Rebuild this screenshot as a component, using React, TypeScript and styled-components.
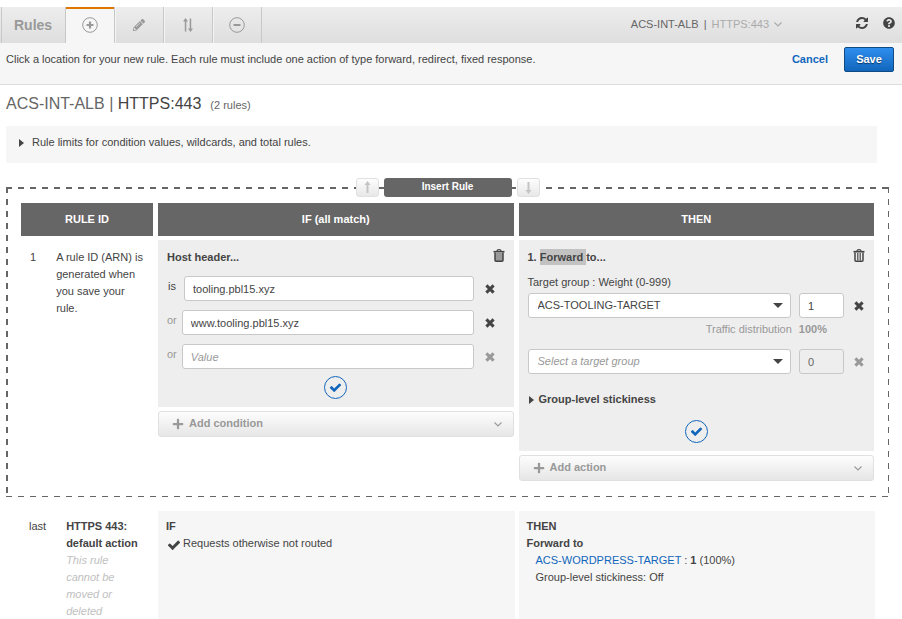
import React from "react";
import styled, { createGlobalStyle, css } from "styled-components";
import { FaPlus, FaPencilAlt, FaQuestionCircle } from "react-icons/fa";

const INK = "#444";
const MUTED = "#999";
const BLUE = "#1166bb";
const DARK = "#666";

const GlobalStyle = createGlobalStyle`
  * { box-sizing: border-box; }
  body {
    margin: 0;
    background: #fff;
    color: ${INK};
    font: 11px/17px "Liberation Sans", Arial, sans-serif;
  }
  button, input, select { font: inherit; color: inherit; margin: 0; }
  h1, h2, p { margin: 0; }
  svg { display: block; flex: none; }
`;

const Page = styled.div`
  display: flex;
  flex-direction: column;
  min-height: 100vh;
  padding-top: 7px;
`;

/* ---------- top bar ---------- */

const TopBar = styled.header`
  display: flex;
  align-items: stretch;
  height: 36px;
  padding-left: 1px;
  background: linear-gradient(#ededed, #dedede);
`;

const BarTitle = styled.div`
  display: flex;
  align-items: center;
  width: 65px;
  padding-left: 12px;
  border-left: 1px solid #c8c8c8;
  border-right: 1px solid #c8c8c8;
  font-size: 14px;
  font-weight: bold;
  color: ${MUTED};
`;

const Tab = styled.button<{ $active?: boolean }>`
  display: flex;
  align-items: center;
  justify-content: center;
  width: 49px;
  padding: 0;
  border: 0;
  border-right: 1px solid #c8c8c8;
  background: transparent;
  color: ${MUTED};
  box-shadow: inset 1px 0 #f4f4f4;
  ${(p) =>
    p.$active &&
    css`
      background: #f6f6f6;
      box-shadow: inset 0 2px #e07700;
    `}
`;

const BarEnd = styled.div`
  display: flex;
  align-items: center;
  margin-left: auto;
  padding: 0 7px 2px 0;
`;

const ListenerMenu = styled.button`
  display: flex;
  align-items: center;
  gap: 5px;
  padding: 0;
  margin-right: 74px;
  border: 0;
  background: none;
  color: ${DARK};
`;

const Pale = styled.span`
  color: #aaa;
`;

const IconButton = styled.button<{ $pale?: boolean }>`
  display: flex;
  align-items: center;
  justify-content: center;
  flex: none;
  padding: 0;
  border: 0;
  background: none;
  color: ${(p) => (p.$pale ? MUTED : INK)};
`;

const BarIcons = styled.div`
  display: flex;
  gap: 15px;
  padding-bottom: 2px;
`;

/* ---------- instruction bar ---------- */

const Instruction = styled.div`
  display: flex;
  align-items: flex-start;
  justify-content: space-between;
  height: 42px;
  padding: 4px 8px 0 6px;
  background: #f6f6f6;
  border-bottom: 1px solid #ddd;
`;

const InstructionText = styled.p`
  padding-top: 4px;
`;

const Actions = styled.div`
  display: flex;
  align-items: center;
  gap: 16px;
`;

const Cancel = styled.button`
  padding: 0;
  border: 0;
  background: none;
  font-weight: bold;
  color: ${BLUE};
`;

const Save = styled.button`
  height: 25px;
  width: 50px;
  padding: 0;
  border: 1px solid #0f4a85;
  border-radius: 2px;
  background: linear-gradient(#2f8eef, #1166bb);
  font-weight: bold;
  color: #fff;
  text-shadow: 0 1px 1px #0a3a6a;
`;

/* ---------- heading and limits ---------- */

const Heading = styled.h1`
  display: flex;
  align-items: baseline;
  gap: 9px;
  padding: 9px 6px 0;
  font-size: 16px;
  line-height: 20px;
  font-weight: normal;
`;

const Soft = styled.span`
  color: ${DARK};
`;

const Count = styled.small`
  font-size: 11px;
  color: ${DARK};
`;

const Limits = styled.button`
  display: flex;
  align-items: center;
  gap: 8px;
  height: 37px;
  margin: 11px 25px 0 6px;
  padding: 0 13px 4px;
  border: 0;
  background: #f6f6f6;
  text-align: left;
`;

/* ---------- rule editor ---------- */

const dash = (dir: string) =>
  `linear-gradient(${dir}, ${DARK} 50%, transparent 50%)`;

const InsertBox = styled.section`
  position: relative;
  margin: 24px 13px 0 6px;
  padding: 16px 15px;
  background:
    ${dash("to right")} 0 0 / 12px 2px repeat-x,
    ${dash("to right")} 0 100% / 12px 1px repeat-x,
    ${dash("to bottom")} 0 0 / 2px 12px repeat-y,
    ${dash("to bottom")} 100% 0 / 1px 12px repeat-y;
`;

const InsertControls = styled.div`
  position: absolute;
  top: -9px;
  left: 0;
  right: 0;
  display: flex;
  justify-content: center;
  gap: 5px;
`;

const MoveButton = styled.button`
  display: flex;
  align-items: center;
  justify-content: center;
  width: 23px;
  height: 19px;
  padding: 0;
  border: 1px solid #e0e0e0;
  border-radius: 3px;
  background: linear-gradient(#fdfdfd, #e8e8e8);
  color: #c4c4c4;
`;

const InsertButton = styled.button`
  width: 128px;
  height: 19px;
  padding: 0 0 2px;
  border: 0;
  border-radius: 3px;
  background: ${DARK};
  font-size: 10px;
  font-weight: bold;
  color: #fff;
`;

const RuleGrid = styled.div`
  display: grid;
  grid-template-columns: 132px minmax(0, 1fr) minmax(0, 1fr);
  gap: 4px 5px;
  align-items: start;
`;

const ColumnHead = styled.h2`
  padding: 8px 0;
  background: ${DARK};
  font-size: 11px;
  font-weight: bold;
  text-align: center;
  color: #fff;
`;

const RuleId = styled.div`
  display: flex;
  gap: 20px;
  padding: 9px 0 0 9px;
`;

const RuleNote = styled.p`
  width: 92px;
`;

const Stack = styled.div`
  display: flex;
  flex-direction: column;
  gap: 4px;
`;

const Panel = styled.div`
  padding: 9px 9px 8px;
  background: #eee;
`;

const PanelHead = styled.div`
  display: flex;
  align-items: flex-start;
  justify-content: space-between;
  font-weight: bold;
`;

const Marked = styled.mark`
  padding: 2px 0;
  background: #c2c2c2;
  color: inherit;
`;

const Conditions = styled.div`
  display: flex;
  flex-direction: column;
  gap: 9px;
  padding-right: 9px;
  margin-top: 10px;
`;

const Condition = styled.div<{ $first?: boolean }>`
  display: flex;
  align-items: center;
  padding-left: ${(p) => (p.$first ? "1px" : "0")};
  color: ${(p) => (p.$first ? INK : MUTED)};
`;

const Prefix = styled.label<{ $first?: boolean }>`
  padding: 0 ${(p) => (p.$first ? "8px" : "5px")} 5px 0;
`;

const field = css`
  height: 25px;
  border: 1px solid #c8c8c8;
  border-radius: 3px;
  background: #fff;
  color: ${INK};
  &::placeholder {
    color: ${MUTED};
    font-style: italic;
    opacity: 1;
  }
`;

const TextField = styled.input`
  ${field}
  flex: 1;
  min-width: 0;
  margin-right: 10px;
  padding: 0 8px;
`;

const WeightField = styled.input`
  ${field}
  width: 45px;
  margin: 0 9px 0 8px;
  padding: 0 8px;
  &:disabled {
    background: #eee;
    color: ${DARK};
  }
`;

const ConfirmRow = styled.div<{ $top: number }>`
  display: flex;
  justify-content: center;
  padding-top: ${(p) => p.$top}px;
`;

const Confirm = styled.button`
  display: flex;
  align-items: center;
  justify-content: center;
  width: 23px;
  height: 23px;
  padding: 0;
  border: 1px solid ${BLUE};
  border-radius: 50%;
  background: transparent;
  color: ${BLUE};
`;

const AddButton = styled.button`
  display: flex;
  align-items: center;
  gap: 5px;
  height: 26px;
  padding: 0 11px 1px 13px;
  border: 1px solid #e0e0e0;
  border-radius: 3px;
  background: linear-gradient(#fdfdfd, #e6e6e6);
  font-weight: bold;
  color: ${MUTED};
`;

const AddLabel = styled.span`
  flex: 1;
  text-align: left;
`;

const TargetLabel = styled.div`
  padding: 8px 0 2px;
`;

const TargetRow = styled.div`
  display: flex;
  align-items: center;
`;

const SelectWrap = styled.div`
  position: relative;
  flex: 1;
  min-width: 0;
`;

const TargetSelect = styled.select<{ $empty?: boolean }>`
  ${field}
  display: block;
  width: 100%;
  padding: 0 24px 0 9px;
  appearance: none;
  ${(p) => p.$empty && css`color: ${MUTED}; font-style: italic;`}
`;

const Caret = styled.span`
  position: absolute;
  right: 8px;
  top: 10px;
  border: 5px solid transparent;
  border-top-color: ${INK};
  border-bottom: 0;
  pointer-events: none;
`;

const Traffic = styled.div`
  display: flex;
  justify-content: flex-end;
  gap: 7px;
  padding: 3px 38px 11px 0;
  color: ${MUTED};
`;

const Stickiness = styled.button`
  display: flex;
  align-items: center;
  gap: 5px;
  margin-top: 17px;
  padding: 0 0 0 1px;
  border: 0;
  background: none;
  font-weight: bold;
`;

/* ---------- default rule ---------- */

const DefaultRule = styled.section`
  flex: 1;
  display: grid;
  grid-template-columns: 132px minmax(0, 1fr) minmax(0, 1fr);
  gap: 4px;
  margin: 14px 27px 0 22px;
`;

const DefaultId = styled.div`
  display: flex;
  gap: 20px;
  padding: 7px 0 0 7px;
`;

const DefaultName = styled.div`
  width: 78px;
`;

const Hint = styled.em`
  display: block;
  width: 60px;
  color: #c0c0c0;
`;

const DefaultPanel = styled.div`
  padding: 7px 8px 0;
  background: #f6f6f6;
`;

const Line = styled.div<{ $indent?: boolean }>`
  display: flex;
  align-items: center;
  gap: 2px;
  padding-left: ${(p) => (p.$indent ? "9px" : "0")};
`;

const Link = styled.a`
  color: ${BLUE};
  text-decoration: none;
`;

/* ---------- icons ---------- */

const CirclePlus = ({ minus }: { minus?: boolean }) => (
  <svg width="16" height="16" viewBox="0 0 16 16" fill="none" stroke="currentColor">
    <circle cx="8" cy="8" r="7.3" />
    {minus ? (
      <path d="M4.500 8h7" strokeWidth="2" />
    ) : (
      <path d="M4.500 8h7M8 4.500v7" strokeWidth="2.200" />
    )}
  </svg>
);

const Reorder = () => (
  <svg width="10" height="14" viewBox="0 0 10 14" fill="currentColor">
    <path d="M1.800 13.500V3.500H0L2.500 0 5 3.500H3.300v10z" />
    <path d="M6.700.5h1.500v10H10L7.500 14 5 10.500h1.700z" />
  </svg>
);

const Refresh = () => (
  <svg width="12" height="12" viewBox="0 0 1536 1536" fill="currentColor">
    <path d="M1511 928q0 5-1 7-64 268-268 434.500T764 1536q-146 0-282.500-55T238 1324l-129 129q-19 19-45 19t-45-19-19-45V960q0-26 19-45t45-19h448q26 0 45 19t19 45-19 45l-137 137q71 66 161 102t187 36q134 0 250-65t186-179q11-17 53-117 8-23 30-23h192q13 0 22.500 9.500t9.500 22.500zm25-800v448q0 26-19 45t-45 19h-448q-26 0-45-19t-19-45 19-45l138-138Q969 256 768 256q-134 0-250 65T332 500q-11 17-53 117-8 23-30 23H50q-13 0-22.500-9.500T18 608v-7q65-268 270-434.500T768 0q146 0 284 55.500T1297 212l130-129q19-19 45-19t45 19 19 45z" />
  </svg>
);

const Check = ({ size }: { size: number }) => (
  <svg width={size} height={size} viewBox="0 0 1792 1792" fill="currentColor">
    <path d="M1671 566q0 40-28 68l-724 724-136 136q-28 28-68 28t-68-28l-136-136-362-362q-28-28-28-68t28-68l136-136q28-28 68-28t68 28l294 295 656-657q28-28 68-28t68 28l136 136q28 28 28 68z" />
  </svg>
);

const Chevron = ({ size }: { size: number }) => (
  <svg width={size} height={size} viewBox="0 0 8 8" fill="none" stroke="currentColor" strokeWidth="1.1">
    <path d="M.5 2.500 4 6l3.500-3.500" />
  </svg>
);

const Triangle = () => (
  <svg width="5" height="8" viewBox="0 0 5 8" fill="currentColor">
    <path d="M0 0l5 4-5 4z" />
  </svg>
);

const Cross = () => (
  <svg width="10" height="10" viewBox="0 0 10 10" fill="none" stroke="currentColor" strokeWidth="3">
    <path d="M1.400 1.400l7.200 7.200M8.600 1.400L1.400 8.600" />
  </svg>
);

const Trash = ({ ribbed }: { ribbed?: boolean }) => (
  <svg width="12" height="13" viewBox="0 0 12 13" fill="none" stroke="currentColor">
    <path d="M3.800 2.200C4 .8 4.500.6 6 .6s2 .2 2.200 1.600" strokeWidth="1.1" />
    <path d="M.5 2.700h11" strokeWidth="1.600" />
    <path d="M2 3.500v7.700q0 1 1 1h6q1 0 1-1V3.500" strokeWidth="1.500" fill={ribbed ? "none" : "#999"} />
    {ribbed && <path d="M4.500 4v7.500M6 4v7.500M7.500 4v7.500" strokeWidth=".8" />}
  </svg>
);

const Arrow = ({ down }: { down?: boolean }) => (
  <svg width="7" height="13" viewBox="0 0 7 13" fill="currentColor">
    <path d={down ? "M2.500 1h2v8h2l-3 4-3-4h2z" : "M2.500 12h2V4h2l-3-4-3 4h2z"} />
  </svg>
);

/* ---------- small composed parts ---------- */

const RemoveSlot = styled(IconButton)`
  width: 12px;
  height: 24px;
`;

const RemoveButton = ({ pale }: { pale?: boolean }) => (
  <RemoveSlot $pale={pale} type="button" aria-label="Remove">
    <Cross />
  </RemoveSlot>
);

const CheckSlot = styled.span`
  padding: 2px 0 0 1px;
`;

/* ---------- data ---------- */

const conditions = [
  { prefix: "is", value: "tooling.pbl15.xyz" },
  { prefix: "or", value: "www.tooling.pbl15.xyz" },
  { prefix: "or", value: "" },
];

export default function App() {
  return (
    <Page>
      <GlobalStyle />
      <TopBar>
        <BarTitle>Rules</BarTitle>
        <Tab $active aria-label="Add rules"><CirclePlus /></Tab>
        <Tab aria-label="Edit rules"><FaPencilAlt size={12} /></Tab>
        <Tab aria-label="Reorder rules"><Reorder /></Tab>
        <Tab aria-label="Delete rules"><CirclePlus minus /></Tab>
        <BarEnd>
          <ListenerMenu>
            <span>ACS-INT-ALB</span>
            <span>|</span>
            <Pale>HTTPS:443</Pale>
            <Pale><Chevron size={8} /></Pale>
          </ListenerMenu>
          <BarIcons>
            <IconButton aria-label="Refresh"><Refresh /></IconButton>
            <IconButton aria-label="Help"><FaQuestionCircle size={12} /></IconButton>
          </BarIcons>
        </BarEnd>
      </TopBar>

      <Instruction>
        <InstructionText>
          Click a location for your new rule. Each rule must include one action of type forward, redirect, fixed response.
        </InstructionText>
        <Actions>
          <Cancel>Cancel</Cancel>
          <Save>Save</Save>
        </Actions>
      </Instruction>

      <Heading>
        <span><Soft>ACS-INT-ALB |</Soft> HTTPS:443</span>
        <Count>(2 rules)</Count>
      </Heading>

      <Limits aria-expanded={false}>
        <Triangle />
        Rule limits for condition values, wildcards, and total rules.
      </Limits>

      <InsertBox>
        <InsertControls>
          <MoveButton aria-label="Move up"><Arrow /></MoveButton>
          <InsertButton>Insert Rule</InsertButton>
          <MoveButton aria-label="Move down"><Arrow down /></MoveButton>
        </InsertControls>

        <RuleGrid>
          <ColumnHead>RULE ID</ColumnHead>
          <ColumnHead>IF (all match)</ColumnHead>
          <ColumnHead>THEN</ColumnHead>

          <RuleId>
            <span>1</span>
            <RuleNote>A rule ID (ARN) is generated when you save your rule.</RuleNote>
          </RuleId>

          <Stack>
            <Panel>
              <PanelHead>
                <span>Host header...</span>
                <IconButton aria-label="Delete condition"><Trash /></IconButton>
              </PanelHead>
              <Conditions>
                {conditions.map((c, i) => (
                  <Condition key={i} $first={i === 0}>
                    <Prefix $first={i === 0} htmlFor={`host-${i}`}>{c.prefix}</Prefix>
                    <TextField id={`host-${i}`} defaultValue={c.value} placeholder="Value" />
                    <RemoveButton pale={!c.value} />
                  </Condition>
                ))}
              </Conditions>
              <ConfirmRow $top={7}>
                <Confirm aria-label="Confirm condition"><Check size={13} /></Confirm>
              </ConfirmRow>
            </Panel>
            <AddButton>
              <FaPlus size={12} />
              <AddLabel>Add condition</AddLabel>
              <Chevron size={8} />
            </AddButton>
          </Stack>

          <Stack>
            <Panel>
              <PanelHead>
                <span>1. <Marked>Forward </Marked>to...</span>
                <IconButton aria-label="Delete action"><Trash ribbed /></IconButton>
              </PanelHead>
              <TargetLabel>Target group : Weight (0-999)</TargetLabel>
              <TargetRow>
                <SelectWrap>
                  <TargetSelect aria-label="Target group">
                    <option>ACS-TOOLING-TARGET</option>
                  </TargetSelect>
                  <Caret />
                </SelectWrap>
                <WeightField aria-label="Weight" defaultValue="1" />
                <RemoveButton />
              </TargetRow>
              <Traffic>
                <span>Traffic distribution</span>
                <strong>100%</strong>
              </Traffic>
              <TargetRow>
                <SelectWrap>
                  <TargetSelect aria-label="Second target group" $empty>
                    <option>Select a target group</option>
                  </TargetSelect>
                  <Caret />
                </SelectWrap>
                <WeightField aria-label="Second weight" defaultValue="0" disabled />
                <RemoveButton pale />
              </TargetRow>
              <Stickiness aria-expanded={false}>
                <Triangle />
                Group-level stickiness
              </Stickiness>
              <ConfirmRow $top={12}>
                <Confirm aria-label="Confirm action"><Check size={13} /></Confirm>
              </ConfirmRow>
            </Panel>
            <AddButton>
              <FaPlus size={12} />
              <AddLabel>Add action</AddLabel>
              <Chevron size={8} />
            </AddButton>
          </Stack>
        </RuleGrid>
      </InsertBox>

      <DefaultRule>
        <DefaultId>
          <span>last</span>
          <DefaultName>
            <strong>HTTPS 443: default action</strong>
            <Hint>This rule cannot be moved or deleted</Hint>
          </DefaultName>
        </DefaultId>
        <DefaultPanel>
          <strong>IF</strong>
          <Line>
            <CheckSlot><Check size={14} /></CheckSlot>
            Requests otherwise not routed
          </Line>
        </DefaultPanel>
        <DefaultPanel>
          <strong>THEN</strong>
          <Line><strong>Forward to</strong></Line>
          <Line $indent>
            <span><Link href="#target">ACS-WORDPRESS-TARGET</Link> : <strong>1</strong> (100%)</span>
          </Line>
          <Line $indent>Group-level stickiness: Off</Line>
        </DefaultPanel>
      </DefaultRule>
    </Page>
  );
}
